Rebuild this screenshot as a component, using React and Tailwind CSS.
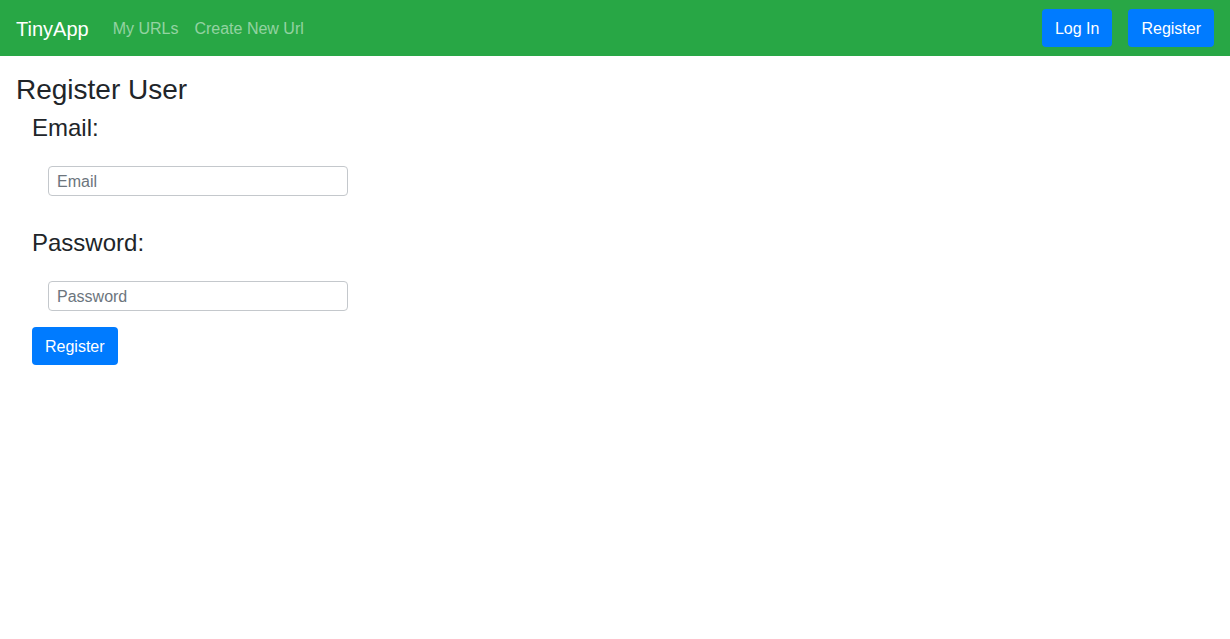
export default function App() {
  const font = { fontFamily: '"Liberation Sans", Arial, sans-serif' };
  return (
    <div style={font} className="min-h-[639px] bg-white text-[#212529]">
      <nav className="h-[56px] bg-[#28a745] flex items-center px-4">
        <span className="text-[20px] leading-[30px] pt-[2px] text-white mr-4">TinyApp</span>
        <a className="px-2 text-[16px] leading-6 pt-[2px] text-white/50">My URLs</a>
        <a className="px-2 text-[16px] leading-6 pt-[2px] text-white/50">Create New Url</a>
        <div className="ml-auto flex gap-4">
          <button className="h-[38px] pt-[2px] px-[13px] rounded bg-[#007bff] text-white text-[16px]">Log In</button>
          <button className="h-[38px] pt-[2px] px-[13px] rounded bg-[#007bff] text-white text-[16px]">Register</button>
        </div>
      </nav>
      <main className="px-4 pt-[17px]">
        <h3 className="text-[28px] leading-[34px] mb-[7px]">Register User</h3>
        <form className="pl-4 flex flex-col items-start">
          <h4 className="text-[24px] leading-[28px]">Email:</h4>
          <div className="pl-4 mt-6">
            <input
              type="email"
              placeholder="Email"
              style={font}
              className="w-[300px] h-[30px] pt-[2px] border border-[#c4c8cc] rounded px-2 text-[16px] placeholder:text-[#6c757d] outline-none"
            />
          </div>
          <h4 className="text-[24px] leading-[28px] mt-[33px]">Password:</h4>
          <div className="pl-4 mt-6">
            <input
              type="password"
              placeholder="Password"
              style={font}
              className="w-[300px] h-[30px] pt-[2px] border border-[#c4c8cc] rounded px-2 text-[16px] placeholder:text-[#6c757d] outline-none"
            />
          </div>
          <button type="button" className="mt-4 h-[38px] pt-[2px] px-[13px] rounded bg-[#007bff] text-white text-[16px]">Register</button>
        </form>
      </main>
    </div>
  );
}
